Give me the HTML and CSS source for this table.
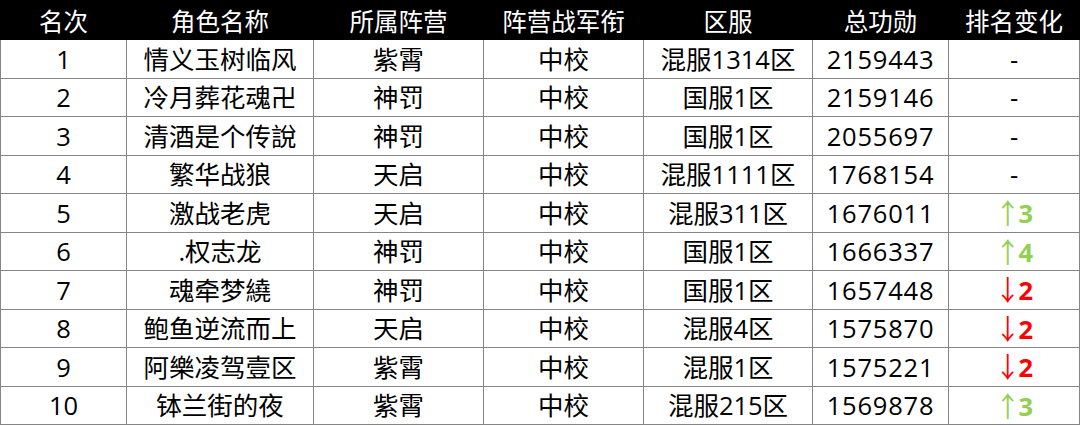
FILE: index.html
```html
<!DOCTYPE html>
<html lang="zh">
<head>
<meta charset="utf-8">
<link rel="stylesheet" href="styles.css">
</head>
<body>
<table class="rank">
<colgroup>
<col class="c1"><col class="c2"><col class="c3"><col class="c4"><col class="c5"><col class="c6"><col class="c7">
</colgroup>
<thead>
<tr><th>名次</th><th>角色名称</th><th>所属阵营</th><th>阵营战军衔</th><th>区服</th><th>总功勋</th><th>排名变化</th></tr>
</thead>
<tbody>
<tr><td>1</td><td>情义玉树临风</td><td>紫霄</td><td>中校</td><td>混服1314区</td><td>2159443</td><td class="same">-</td></tr>
<tr><td>2</td><td>冷月葬花魂卍</td><td>神罚</td><td>中校</td><td>国服1区</td><td>2159146</td><td class="same">-</td></tr>
<tr><td>3</td><td>清酒是个传說</td><td>神罚</td><td>中校</td><td>国服1区</td><td>2055697</td><td class="same">-</td></tr>
<tr><td>4</td><td>繁华战狼</td><td>天启</td><td>中校</td><td>混服1111区</td><td>1768154</td><td class="same">-</td></tr>
<tr><td>5</td><td>激战老虎</td><td>天启</td><td>中校</td><td>混服311区</td><td>1676011</td><td class="up"><span class="arr">↑</span>3</td></tr>
<tr><td>6</td><td>.权志龙</td><td>神罚</td><td>中校</td><td>国服1区</td><td>1666337</td><td class="up"><span class="arr">↑</span>4</td></tr>
<tr><td>7</td><td>魂牵梦繞</td><td>神罚</td><td>中校</td><td>国服1区</td><td>1657448</td><td class="down"><span class="arr">↓</span>2</td></tr>
<tr><td>8</td><td>鲍鱼逆流而上</td><td>天启</td><td>中校</td><td>混服4区</td><td>1575870</td><td class="down"><span class="arr">↓</span>2</td></tr>
<tr><td>9</td><td>阿樂凌驾壹区</td><td>紫霄</td><td>中校</td><td>混服1区</td><td>1575221</td><td class="down"><span class="arr">↓</span>2</td></tr>
<tr><td>10</td><td>钵兰街的夜</td><td>紫霄</td><td>中校</td><td>混服215区</td><td>1569878</td><td class="up"><span class="arr">↑</span>3</td></tr>
</tbody>
</table>
</body>
</html>
```
FILE: styles.css
```css
html, body {
  margin: 0;
  padding: 0;
  background: #ffffff;
}
.rank {
  border-collapse: collapse;
  table-layout: fixed;
  width: 1079px;
  font-family: "Open Sans", "Noto Sans CJK SC", sans-serif;
  font-size: 25.5px;
  color: #000;
}
.c1 { width: 126px; }
.c2 { width: 187px; }
.c3 { width: 170px; }
.c4 { width: 160px; }
.c5 { width: 169px; }
.c6 { width: 136px; }
.c7 { width: 131px; }
.rank th {
  background: #000;
  color: #fff;
  font-weight: normal;
  font-size: 24.5px;
  height: 38px;
  padding: 0;
  text-align: center;
  border: 1px solid #000;
}
.rank td {
  height: 37.5px;
  padding: 0;
  text-align: center;
  border: 1.5px solid #858585;
  line-height: 36px;
}
.rank td:nth-child(6) { letter-spacing: 0.8px; }
.rank tbody tr:first-child td { border-top: none; }
.up { color: #92d050; font-weight: bold; }
.down { color: #ff0000; font-weight: bold; }
.arr {
  font-weight: normal;
  font-family: "Noto Sans CJK SC", sans-serif;
  display: inline-block;
  margin-right: -2px;
  transform: scaleY(1.1);
}
```
